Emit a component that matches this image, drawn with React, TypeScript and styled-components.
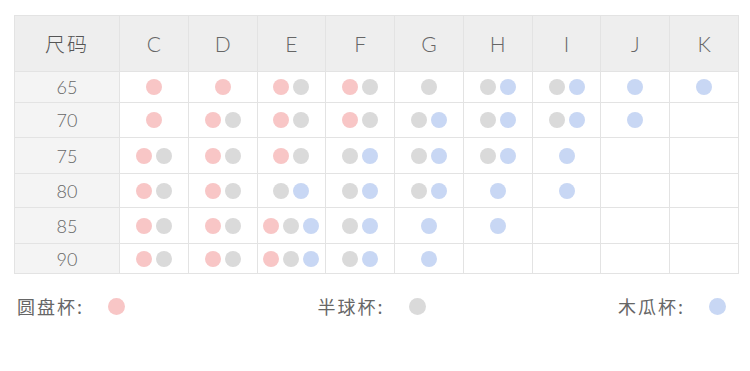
import * as React from "react";
import styled, { createGlobalStyle } from "styled-components";

type Cup = "p" | "g" | "b";

const GlobalStyle = createGlobalStyle`
  body {
    margin: 0;
    background: #fff;
    font-family: "Lato", "Noto Sans CJK SC", sans-serif;
    color: #666;
  }
`;

const cupColors: Record<Cup, string> = {
  p: "#f8c6c6",
  g: "#dadada",
  b: "#c8d7f4",
};

const sizes = ["C", "D", "E", "F", "G", "H", "I", "J", "K"];

const rows: Array<{ band: string; cells: string[] }> = [
  { band: "65", cells: ["p", "p", "pg", "pg", "g", "gb", "gb", "b", "b"] },
  { band: "70", cells: ["p", "pg", "pg", "pg", "gb", "gb", "gb", "b", ""] },
  { band: "75", cells: ["pg", "pg", "pg", "gb", "gb", "gb", "b", "", ""] },
  { band: "80", cells: ["pg", "pg", "gb", "gb", "gb", "b", "b", "", ""] },
  { band: "85", cells: ["pg", "pg", "pgb", "gb", "b", "b", "", "", ""] },
  { band: "90", cells: ["pg", "pg", "pgb", "gb", "b", "", "", "", ""] },
];

const Page = styled.div`
  padding: 15px 12px 0 14px;
`;

const Chart = styled.div`
  box-sizing: border-box;
  width: 725px;
  display: grid;
  grid-template-columns: 105px repeat(9, 1fr);
  grid-template-rows: 56px 31px 35px 36px 34px 36px 30px;
  border-top: 1px solid #e3e3e3;
  border-left: 1px solid #e3e3e3;
`;

const Cell = styled.div<{ $head?: boolean; $side?: boolean }>`
  box-sizing: border-box;
  display: flex;
  align-items: center;
  justify-content: center;
  gap: 4px;
  border-right: 1px solid #e3e3e3;
  border-bottom: 1px solid #e3e3e3;
  background: ${(p) => (p.$head ? "#eeeeee" : p.$side ? "#f4f4f4" : "#fff")};
  font-size: ${(p) => (p.$head ? "21px" : "18px")};
  font-weight: 300;
  color: #666;
`;

const CornerLabel = styled.span`
  font-family: "Noto Sans CJK SC", sans-serif;
  font-size: 20px;
  letter-spacing: 2px;
  color: #555;
`;

const Dot = styled.span<{ $cup: Cup; $size?: number }>`
  display: inline-block;
  width: ${(p) => p.$size ?? 16}px;
  height: ${(p) => p.$size ?? 16}px;
  border-radius: 50%;
  background: ${(p) => cupColors[p.$cup]};
`;

const Legend = styled.div`
  display: flex;
  justify-content: space-between;
  align-items: center;
  width: 709px;
  height: 20px;
  margin: 22px 0 0 3px;
`;

const LegendItem = styled.div`
  display: flex;
  align-items: center;
  gap: 24px;
`;

const LegendLabel = styled.span`
  font-family: "Noto Sans CJK SC", sans-serif;
  font-size: 18px;
  letter-spacing: 2px;
  color: #666;
`;

const legend: Array<{ label: string; cup: Cup }> = [
  { label: "圆盘杯:", cup: "p" },
  { label: "半球杯:", cup: "g" },
  { label: "木瓜杯:", cup: "b" },
];

const App: React.FC = () => {
  return (
    <Page>
      <GlobalStyle />
      <Chart>
        <Cell $head>
          <CornerLabel>尺码</CornerLabel>
        </Cell>
        {sizes.map((s) => (
          <Cell $head key={s}>
            {s}
          </Cell>
        ))}
        {rows.map((row) => (
          <React.Fragment key={row.band}>
            <Cell $side>{row.band}</Cell>
            {row.cells.map((cups, i) => (
              <Cell key={row.band + sizes[i]}>
                {cups.split("").map((c) => (
                  <Dot key={c} $cup={c as Cup} />
                ))}
              </Cell>
            ))}
          </React.Fragment>
        ))}
      </Chart>
      <Legend>
        {legend.map((item) => (
          <LegendItem key={item.cup}>
            <LegendLabel>{item.label}</LegendLabel>
            <Dot $cup={item.cup} $size={17} />
          </LegendItem>
        ))}
      </Legend>
    </Page>
  );
};

export default App;
